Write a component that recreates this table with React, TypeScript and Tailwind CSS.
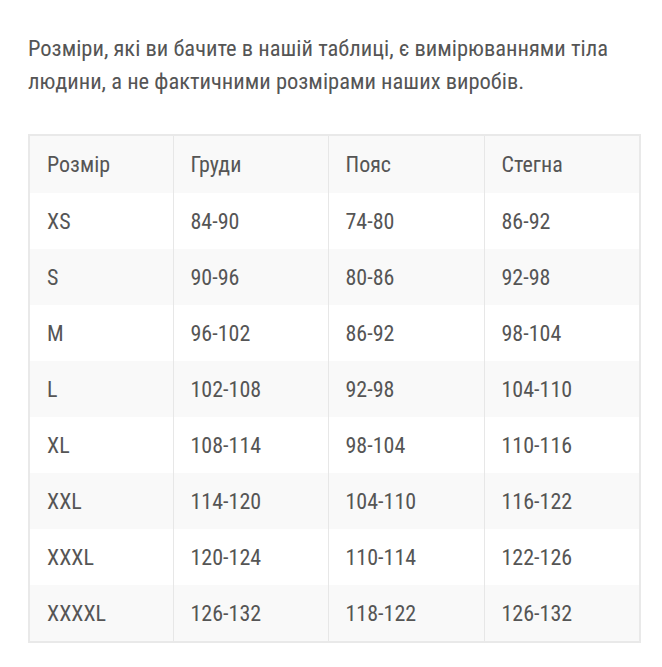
import React from "react";

const rows: string[][] = [
  ["XS", "84-90", "74-80", "86-92"],
  ["S", "90-96", "80-86", "92-98"],
  ["M", "96-102", "86-92", "98-104"],
  ["L", "102-108", "92-98", "104-110"],
  ["XL", "108-114", "98-104", "110-116"],
  ["XXL", "114-120", "104-110", "116-122"],
  ["XXXL", "120-124", "110-114", "122-126"],
  ["XXXXL", "126-132", "118-122", "126-132"],
];

const header = ["Розмір", "Груди", "Пояс", "Стегна"];

export default function App() {
  return (
    <div
      className="bg-white w-[662px] h-[667px] pl-[28px] pr-[21px] pt-[32px] text-[#555] font-stretch-condensed"
      style={{ fontFamily: "'Roboto Condensed', Roboto, 'Liberation Sans', sans-serif" }}
    >
      <p className="text-[22.5px] leading-[33px]">
        Розміри, які ви бачите в нашій таблиці, є вимірюваннями тіла людини, а не фактичними розмірами наших виробів.
      </p>
      <div className="mt-[36px] border-2 border-[#e9e9e9]">
        <table className="w-full border-collapse text-[22px]">
          <colgroup>
            <col className="w-[143px]" />
            <col className="w-[155px]" />
            <col className="w-[156px]" />
            <col />
          </colgroup>
          <tbody>
            <tr className="bg-[#f9f9f9] h-[57px]">
              {header.map((h, i) => (
                <td
                  key={i}
                  className={`pl-[17px] align-middle font-normal ${i > 0 ? "border-l border-[#e7e7e7]" : ""}`}
                >
                  {h}
                </td>
              ))}
            </tr>
            {rows.map((r, ri) => (
              <tr key={ri} className={`h-[56px] ${ri % 2 === 0 ? "bg-white" : "bg-[#f9f9f9]"}`}>
                {r.map((c, ci) => (
                  <td
                    key={ci}
                    className={`pl-[17px] align-middle ${ci > 0 ? "border-l border-[#e7e7e7]" : ""}`}
                  >
                    {c}
                  </td>
                ))}
              </tr>
            ))}
          </tbody>
        </table>
      </div>
    </div>
  );
}
